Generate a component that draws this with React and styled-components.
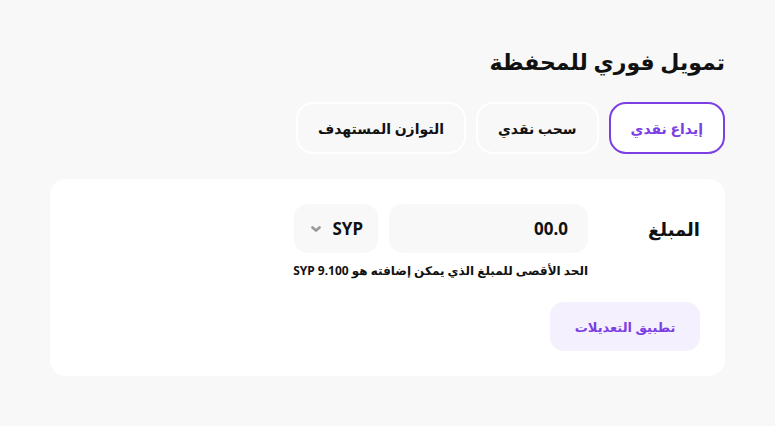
import React from "react"
import styled, { createGlobalStyle } from "styled-components"

const GlobalStyle = createGlobalStyle`
    html, body {
        margin: 0;
        padding: 0;
        background: #f8f8f8;
        font-family: "Noto Sans", "DejaVu Sans", sans-serif;
    }
`

const tabs = [
    { id: "deposit", label: "إيداع نقدي" },
    { id: "withdraw", label: "سحب نقدي" },
    { id: "target", label: "التوازن المستهدف" },
]

const ChevronIcon = () => (
    <svg width="12" height="12" viewBox="0 0 24 24" fill="none">
        <path d="M5 9l7 6 7-6" stroke="#9a9a9a" strokeWidth="5.5" strokeLinecap="round" strokeLinejoin="round" />
    </svg>
)

class App extends React.Component {
    state = { active: "deposit" }

    render() {
        const { active } = this.state
        return (
            <Page dir="rtl">
                <GlobalStyle />
                <Title>تمويل فوري للمحفظة</Title>

                <Tabs>
                    {tabs.map(t => (
                        <Tab key={t.id} active={t.id === active} onClick={() => this.setState({ active: t.id })}>
                            {t.label}
                        </Tab>
                    ))}
                </Tabs>

                <Card>
                    <Row>
                        <Label>المبلغ</Label>
                        <Field>
                            <Inputs>
                                <AmountInput defaultValue="00.0" />
                                <CurrencySelect>
                                    <span>SYP</span>
                                    <ChevronIcon />
                                </CurrencySelect>
                            </Inputs>
                            <Hint>الحد الأقصى للمبلغ الذي يمكن إضافته هو SYP 9.100</Hint>
                        </Field>
                    </Row>
                    <ApplyButton>تطبيق التعديلات</ApplyButton>
                </Card>
            </Page>
        )
    }
}

const Page = styled.div`
    width: 675px;
    margin: 0 auto;
    padding: 46px 0 50px;
    box-sizing: border-box;
`
const Title = styled.h1`
    margin: 0;
    font-size: 22px;
    font-weight: 700;
    color: #111;
    line-height: 30px;
`
const Tabs = styled.div`
    display: flex;
    gap: 10px;
    margin-top: 26px;
`
const Tab = styled.button`
    height: 52px;
    padding: 0 20px;
    border-radius: 17px;
    background: ${p => (p.active ? "#fff" : "transparent")};
    border: 2px solid ${p => (p.active ? "#7b3fe4" : "#fff")};
    color: ${p => (p.active ? "#7b3fe4" : "#111")};
    font-family: inherit;
    font-size: 14px;
    font-weight: 700;
    cursor: pointer;
`
const Card = styled.div`
    margin-top: 25px;
    background: #fff;
    border-radius: 16px;
    padding: 25px 25px 25px;
    display: flex;
    flex-direction: column;
    align-items: flex-start;
`
const Row = styled.div`
    display: flex;
    align-items: flex-start;
`
const Label = styled.div`
    width: 112px;
    height: 49px;
    display: flex;
    align-items: center;
    font-size: 18px;
    font-weight: 700;
    color: #111;
`
const Field = styled.div`
    display: flex;
    flex-direction: column;
`
const Inputs = styled.div`
    display: flex;
    gap: 11px;
`
const AmountInput = styled.input`
    width: 199px;
    height: 49px;
    box-sizing: border-box;
    border: none;
    outline: none;
    border-radius: 14px;
    background: #f8f8f8;
    padding: 0 20px;
    text-align: right;
    direction: ltr;
    font-family: inherit;
    font-size: 17px;
    font-weight: 700;
    color: #111;
`
const CurrencySelect = styled.div`
    width: 84px;
    height: 49px;
    box-sizing: border-box;
    border-radius: 14px;
    background: #f8f8f8;
    display: flex;
    align-items: center;
    gap: 10px;
    padding: 0 15px;
    font-size: 17px;
    font-weight: 700;
    color: #111;
`
const Hint = styled.div`
    margin-top: 9px;
    font-size: 12px;
    font-weight: 700;
    color: #111;
`
const ApplyButton = styled.button`
    margin-top: 23px;
    width: 150px;
    height: 49px;
    border: none;
    border-radius: 14px;
    background: #f5f0fd;
    color: #7b3fe4;
    font-family: inherit;
    font-size: 13px;
    font-weight: 600;
    cursor: pointer;
`

export default App
